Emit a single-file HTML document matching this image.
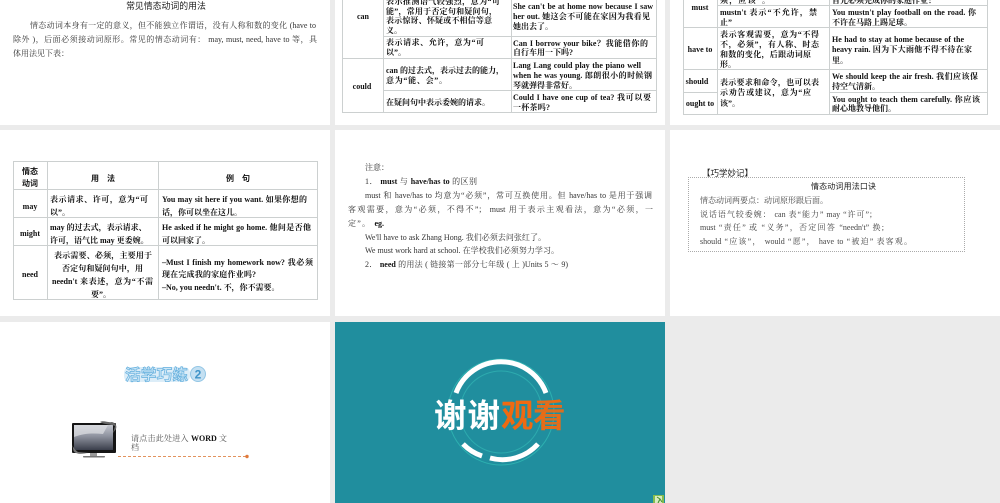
<!DOCTYPE html>
<html lang="zh-CN">
<head>
<meta charset="utf-8">
<title>常见情态动词的用法</title>
<style>
html,body{margin:0;padding:0;width:1000px;height:503px;overflow:hidden;background:#ebebeb}
#w{position:absolute;left:0;top:0;width:1000px;height:503px;overflow:hidden;filter:blur(.35px)}
.s{position:absolute;background:#fff}
.ln{position:absolute;background:#ccd0d0}
.l,.c,.f{position:absolute;white-space:nowrap;line-height:12px;height:12px;margin-top:1px}
.l{text-align:left}
.f{text-align:justify;text-align-last:justify}
.c{text-align:center;transform:translateX(-50%)}
.b{font:bold 8px/12px "Liberation Serif","Noto Serif CJK SC",serif;color:#111}
.r{font:8px/12px "Liberation Serif","Noto Serif CJK SC",serif;color:#333}
.h{font:8.5px/12px "Liberation Sans","Noto Sans CJK SC",sans-serif;color:#222}
.r b{color:#111}
</style>
</head>
<body>
<div id="w">
<!-- slides -->
<div class="s" style="left:0;top:0;width:330px;height:125px"></div>
<div class="s" style="left:335px;top:0;width:330px;height:125px"></div>
<div class="s" style="left:670px;top:0;width:330px;height:125px"></div>
<div class="s" style="left:0;top:130px;width:330px;height:186px"></div>
<div class="s" style="left:335px;top:130px;width:330px;height:186px"></div>
<div class="s" style="left:670px;top:130px;width:330px;height:186px"></div>
<div class="s" style="left:0;top:322px;width:330px;height:181px"></div>

<!-- slide 1 -->
<div class="c h" style="left:166px;top:-1px;font-size:8.9px">常见情态动词的用法</div>
<div class="f r" style="left:30px;top:19px;width:286px">情态动词本身有一定的意义，但不能独立作谓语，没有人称和数的变化 (have to</div>
<div class="f r" style="left:13px;top:33px;width:304px">除外 )，后面必须接动词原形。常见的情态动词有： may, must, need, have to 等，具</div>
<div class="f r" style="left:13px;top:47px;width:52px">体用法见下表：</div>

<!-- slide 2 table -->
<div class="ln" style="left:342px;top:0;width:1px;height:112px"></div>
<div class="ln" style="left:383px;top:0;width:1px;height:112px"></div>
<div class="ln" style="left:511px;top:0;width:1px;height:112px"></div>
<div class="ln" style="left:656px;top:0;width:1px;height:112px"></div>
<div class="ln" style="left:383px;top:36px;width:273px;height:1px"></div>
<div class="ln" style="left:342px;top:58px;width:314px;height:1px"></div>
<div class="ln" style="left:383px;top:90px;width:273px;height:1px"></div>
<div class="ln" style="left:342px;top:112px;width:315px;height:1px"></div>
<div class="c b" style="left:363px;top:10px">can</div>
<div class="c b" style="left:362px;top:80px">could</div>
<div class="f b" style="left:386px;top:-5px;width:114px">表示推测语气较强烈，意为“可</div>
<div class="f b" style="left:386px;top:5px;width:111px">能”，常用于否定句和疑问句，</div>
<div class="f b" style="left:386px;top:14px;width:106px">表示惊讶、怀疑或不相信等意</div>
<div class="l b" style="left:386px;top:24px">义。</div>
<div class="f b" style="left:386px;top:36px;width:98px">表示请求、允许，意为“可</div>
<div class="l b" style="left:386px;top:46px">以”。</div>
<div class="f b" style="left:386px;top:64px;width:116px">can 的过去式，表示过去的能力，</div>
<div class="f b" style="left:386px;top:74px;width:61px">意为“能、会”。</div>
<div class="f b" style="left:386px;top:96px;width:102px">在疑问句中表示委婉的请求。</div>
<div class="f b" style="left:513px;top:0;width:140px">She can't be at home now because I saw</div>
<div class="f b" style="left:513px;top:10px;width:137px">her out. 她这会不可能在家因为我看见</div>
<div class="f b" style="left:513px;top:20px;width:35px">她出去了。</div>
<div class="f b" style="left:513px;top:37px;width:135px">Can I borrow your bike？我能借你的</div>
<div class="f b" style="left:513px;top:46px;width:54px">自行车用一下吗?</div>
<div class="f b" style="left:513px;top:59px;width:128px">Lang Lang could play the piano well</div>
<div class="f b" style="left:513px;top:69px;width:139px">when he was young. 郎朗很小的时候钢</div>
<div class="f b" style="left:513px;top:79px;width:60px">琴就弹得非常好。</div>
<div class="f b" style="left:513px;top:91px;width:138px">Could I have one cup of tea? 我可以要</div>
<div class="f b" style="left:513px;top:101px;width:37px">一杯茶吗?</div>

<!-- slide 3 table -->
<div class="ln" style="left:683px;top:0;width:1px;height:114px"></div>
<div class="ln" style="left:717px;top:0;width:1px;height:114px"></div>
<div class="ln" style="left:829px;top:0;width:1px;height:114px"></div>
<div class="ln" style="left:987px;top:0;width:1px;height:114px"></div>
<div class="ln" style="left:717px;top:5px;width:270px;height:1px"></div>
<div class="ln" style="left:683px;top:27px;width:304px;height:1px"></div>
<div class="ln" style="left:683px;top:69px;width:304px;height:1px"></div>
<div class="ln" style="left:683px;top:92px;width:34px;height:1px"></div>
<div class="ln" style="left:829px;top:92px;width:158px;height:1px"></div>
<div class="ln" style="left:683px;top:114px;width:305px;height:1px"></div>
<div class="c b" style="left:700px;top:1px">must</div>
<div class="c b" style="left:700px;top:43px">have to</div>
<div class="c b" style="left:697px;top:75px">should</div>
<div class="c b" style="left:700px;top:97px">ought to</div>
<div class="f b" style="left:720px;top:-6px;width:50px">须，应该”。</div>
<div class="f b" style="left:720px;top:6px;width:97px">mustn't 表示“不允许，禁</div>
<div class="l b" style="left:720px;top:16px">止”</div>
<div class="f b" style="left:720px;top:28px;width:99px">表示客观需要，意为“不得</div>
<div class="f b" style="left:720px;top:38px;width:99px">不，必须”，有人称、时态</div>
<div class="f b" style="left:720px;top:48px;width:91px">和数的变化，后跟动词原</div>
<div class="l b" style="left:720px;top:58px">形。</div>
<div class="f b" style="left:720px;top:76px;width:99px">表示要求和命令，也可以表</div>
<div class="f b" style="left:720px;top:86px;width:91px">示劝告或建议，意为“应</div>
<div class="l b" style="left:720px;top:97px">该”。</div>
<div class="f b" style="left:832px;top:-6px;width:98px">首先必须完成你的家庭作业！</div>
<div class="f b" style="left:832px;top:6px;width:144px">You mustn't play football on the road. 你</div>
<div class="f b" style="left:832px;top:16px;width:78px">不许在马路上踢足球。</div>
<div class="f b" style="left:832px;top:33px;width:132px">He had to stay at home because of the</div>
<div class="f b" style="left:832px;top:43px;width:140px">heavy rain. 因为下大雨他不得不待在家</div>
<div class="l b" style="left:832px;top:54px">里。</div>
<div class="f b" style="left:832px;top:70px;width:146px">We should keep the air fresh. 我们应该保</div>
<div class="f b" style="left:832px;top:80px;width:45px">持空气清新。</div>
<div class="f b" style="left:832px;top:93px;width:148px">You ought to teach them carefully. 你应该</div>
<div class="f b" style="left:832px;top:102px;width:61px">耐心地教导他们。</div>

<!-- slide 4 table -->
<div class="ln" style="left:13px;top:161px;width:1px;height:138px"></div>
<div class="ln" style="left:47px;top:161px;width:1px;height:138px"></div>
<div class="ln" style="left:158px;top:161px;width:1px;height:138px"></div>
<div class="ln" style="left:317px;top:161px;width:1px;height:138px"></div>
<div class="ln" style="left:13px;top:161px;width:304px;height:1px"></div>
<div class="ln" style="left:13px;top:189px;width:304px;height:1px"></div>
<div class="ln" style="left:13px;top:217px;width:304px;height:1px"></div>
<div class="ln" style="left:13px;top:245px;width:304px;height:1px"></div>
<div class="ln" style="left:13px;top:299px;width:305px;height:1px"></div>
<div class="c b" style="left:30px;top:165px;font-family:'Liberation Sans','Noto Sans CJK SC',sans-serif">情态</div>
<div class="c b" style="left:30px;top:177px;font-family:'Liberation Sans','Noto Sans CJK SC',sans-serif">动词</div>
<div class="f b" style="left:91px;top:172px;width:24px;font-family:'Liberation Sans','Noto Sans CJK SC',sans-serif">用 法</div>
<div class="f b" style="left:226px;top:172px;width:24px;font-family:'Liberation Sans','Noto Sans CJK SC',sans-serif">例 句</div>
<div class="c b" style="left:30px;top:200px">may</div>
<div class="c b" style="left:30px;top:227px">might</div>
<div class="c b" style="left:30px;top:268px">need</div>
<div class="f b" style="left:50px;top:193px;width:98px">表示请求、许可，意为“可</div>
<div class="l b" style="left:50px;top:206px">以”。</div>
<div class="f b" style="left:50px;top:221px;width:95px">may 的过去式，表示请求、</div>
<div class="f b" style="left:50px;top:234px;width:98px">许可，语气比 may 更委婉。</div>
<div class="f b" style="left:54px;top:249px;width:98px">表示需要、必须，主要用于</div>
<div class="f b" style="left:62px;top:262px;width:81px">否定句和疑问句中，用</div>
<div class="f b" style="left:52px;top:275px;width:101px">needn't 来表述，意为“不需</div>
<div class="f b" style="left:91px;top:288px;width:19px">要”。</div>
<div class="f b" style="left:162px;top:193px;width:145px">You may sit here if you want. 如果你想的</div>
<div class="f b" style="left:162px;top:206px;width:79px">话，你可以坐在这儿。</div>
<div class="f b" style="left:162px;top:221px;width:149px">He asked if he might go home. 他问是否他</div>
<div class="f b" style="left:162px;top:234px;width:43px">可以回家了。</div>
<div class="f b" style="left:162px;top:256px;width:151px">–Must I finish my homework now? 我必须</div>
<div class="f b" style="left:162px;top:268px;width:94px">现在完成我的家庭作业吗?</div>
<div class="f b" style="left:162px;top:281px;width:116px">–No, you needn't. 不，你不需要。</div>

<!-- slide 5 -->
<div class="f r" style="left:365px;top:161px;width:20px">注意：</div>
<div class="f r" style="left:365px;top:175px;width:112px">1． <b>must</b> 与 <b>have/has to</b> 的区别</div>
<div class="f r" style="left:365px;top:189px;width:287px">must 和 have/has to 均意为“必须”，常可互换使用。但 have/has to 是用于强调</div>
<div class="f r" style="left:348px;top:203px;width:305px">客观需要，意为“必须，不得不”； must 用于表示主观看法，意为“必须，一</div>
<div class="f r" style="left:348px;top:217px;width:36px">定”。 <b>eg.</b></div>
<div class="f r" style="left:365px;top:231px;width:181px">We'll have to ask Zhang Hong. 我们必须去问张红了。</div>
<div class="f r" style="left:365px;top:244px;width:194px">We must work hard at school. 在学校我们必须努力学习。</div>
<div class="f r" style="left:365px;top:258px;width:203px">2． <b>need</b> 的用法 ( 链接第一部分七年级 ( 上 )Units 5 ～ 9)</div>

<!-- slide 6 -->
<div class="f h" style="left:702px;top:166px;width:44px">【巧学妙记】</div>
<div style="position:absolute;left:688px;top:177px;width:275px;height:73px;border:1px dotted #aaa"></div>
<div class="f h" style="left:811px;top:180px;width:65px;font-size:8px">情态动词用法口诀</div>
<div class="f r" style="left:700px;top:194px;width:127px;color:#444">情态动词两要点：动词原形跟后面。</div>
<div class="f r" style="left:700px;top:208px;width:177px;color:#444">说话语气较委婉： can 表“能力” may “许可”；</div>
<div class="f r" style="left:700px;top:221px;width:184px;color:#444">must “责任” 或 “义务”，否定回答 “needn't” 换;</div>
<div class="f r" style="left:700px;top:235px;width:212px;color:#444">should “应该”， would “愿”， have to “被迫” 表客观。</div>

<!-- slide 7 -->
<svg style="position:absolute;left:0;top:322px" width="330" height="181" viewBox="0 322 330 181">
 <defs>
  <linearGradient id="sc" x1="0" y1="0" x2="0" y2="1">
   <stop offset="0" stop-color="#c4c7cf"/><stop offset=".45" stop-color="#8e929e"/><stop offset="1" stop-color="#3a3e4b"/>
  </linearGradient>
 </defs>
 <rect x="124" y="367" width="66" height="15" rx="6" fill="#dcedf8"/>
 <text x="125" y="380" font-family="Liberation Sans,Noto Sans CJK SC,sans-serif" font-size="15.5" font-weight="bold" fill="#cfe8f7" stroke="#62aedd" stroke-width=".7" textLength="63">活学巧练</text>
 <circle cx="198" cy="374" r="7.5" fill="#c4e0f2" stroke="#93c6e5" stroke-width="1"/>
 <text x="198" y="378.5" text-anchor="middle" font-family="Liberation Sans,sans-serif" font-size="12" font-weight="bold" fill="#3f93c8">2</text>
 <rect x="72" y="423" width="44" height="30" rx="1" fill="#151515"/>
 <rect x="74" y="425" width="39" height="25" fill="url(#sc)"/>
 <path d="M74 425H108L103 434C94 433 84 433 74 437Z" fill="#dcdde2" opacity=".75"/>
 <path d="M100 422C104 420 108 423 112 422C116 423 117 426 116 429L113 433L115 426C111 424 105 425 100 422Z" fill="#666"/>
 <path d="M72 445C74 449 72 451 76 453C81 455 84 453 89 453L78 452C75 450 74 448 72 445Z" fill="#777"/>
 <rect x="90" y="453" width="7" height="3" fill="#999"/>
 <rect x="83" y="456" width="22" height="1.5" rx=".7" fill="#777"/>
 <line x1="118" y1="456.5" x2="246" y2="456.5" stroke="#e2935f" stroke-width="1" stroke-dasharray="3 2"/>
 <circle cx="247" cy="456.5" r="1.7" fill="#e07a3c"/>
</svg>
<div class="f r" style="left:131px;top:432px;width:96px;color:#555">请点击此处进入 <b>WORD</b> 文</div>
<div class="l r" style="left:131px;top:441px;color:#555">档</div>

<!-- slide 8 -->
<div class="s" style="left:335px;top:322px;width:330px;height:181px;background:#208e9e"></div>
<svg style="position:absolute;left:335px;top:322px" width="330" height="181" viewBox="335 322 330 181">
 <defs>
  <pattern id="st" width="4" height="4.2" patternUnits="userSpaceOnUse">
   <rect width="4" height="4.2" fill="#ee6a12"/><rect y="3.2" width="4" height="1" fill="#c8752f"/>
  </pattern>
 </defs>
 <circle cx="501" cy="412" r="53" fill="none" stroke="#2db0b0" stroke-width="1"/>
 <circle cx="501" cy="412" r="41" fill="none" stroke="#2daaae" stroke-width="1"/>
 <g fill="none" stroke="#fff" stroke-width="5">
  <path d="M456 393A48 48 0 0 1 546 393"/>
  <path d="M463 444A48 48 0 0 0 482 456"/>
  <path d="M490 458A48 48 0 0 0 538 444"/>
 </g>
 <text x="434" y="427" font-family="Noto Sans CJK SC,sans-serif" font-size="32.5" font-weight="bold" fill="#fff" textLength="66">谢谢</text>
 <text x="501" y="427" font-family="Noto Sans CJK SC,sans-serif" font-size="32.5" font-weight="bold" fill="#ee6a12" textLength="31">观</text>
 <text x="533" y="427" font-family="Noto Sans CJK SC,sans-serif" font-size="32.5" font-weight="bold" fill="url(#st)" textLength="32">看</text>
 <rect x="653" y="495" width="11" height="8" fill="#86bd4e"/>
 <rect x="655" y="496" width="7" height="7" fill="#d8ecc0"/>
 <path d="M657 497L660 499L658 503M660 499L662 502" stroke="#3f8a2b" stroke-width="1" fill="none"/>
</svg>
</div>
</body>
</html>
